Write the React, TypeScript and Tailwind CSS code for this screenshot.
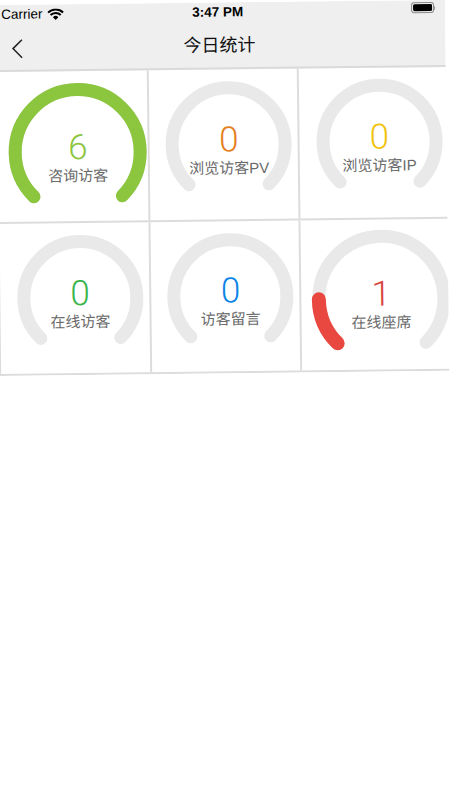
const sans = "font-['Liberation_Sans',sans-serif]";
const cjk = "font-['Liberation_Sans','Noto_Sans_CJK_SC',sans-serif]";

type Stat = {
  label: string;
  value: number;
  color: string;
  radius: number;
  offset: string;
  arc?: "full" | "low";
  arcColor?: string;
};

const ROW_ONE: Stat[] = [
  { label: "咨询访客", value: 6, color: "text-[#8cc63f]", radius: 69, offset: "mt-[12px] ml-[-1px]", arc: "full", arcColor: "#8cc63f" },
  { label: "浏览访客PV", value: 0, color: "text-[#e67e22]", radius: 63, offset: "mt-[0px]" },
  { label: "浏览访客IP", value: 0, color: "text-[#f1c40f]", radius: 63, offset: "mt-[-2px]" },
];

const ROW_TWO: Stat[] = [
  { label: "在线访客", value: 0, color: "text-[#39b54a]", radius: 63, offset: "mt-[0px]" },
  { label: "访客留言", value: 0, color: "text-[#0a84e8]", radius: 63, offset: "mt-[-1px]" },
  { label: "在线座席", value: 1, color: "text-[#d9443c]", radius: 69, offset: "mt-[8px]", arc: "low", arcColor: "#e8483f" },
];

function Gauge({ stat }: { stat: Stat }) {
  const size = stat.radius * 2;
  const mid = stat.radius - 6.5;
  const corner = mid * Math.SQRT1_2;
  const c = stat.radius;
  const left = `${c - corner} ${c + corner}`;
  const right = `${c + corner} ${c + corner}`;
  const full = `M${left} A${mid} ${mid} 0 1 1 ${right}`;

  return (
    <div className={`relative shrink-0 ${stat.offset}`} style={{ width: size, height: size }}>
      <svg width={size} height={size} fill="none" strokeLinecap="round" strokeWidth={13} className="overflow-visible">
        <path d={full} stroke="#e9e9e9" />
        {stat.arc === "full" && <path d={full} stroke={stat.arcColor} />}
        {stat.arc === "low" && (
          <path d={`M${left} A${mid} ${mid} 0 0 1 ${c - mid} ${c}`} stroke={stat.arcColor} strokeWidth={14} />
        )}
      </svg>
      <div className="absolute inset-0 flex flex-col items-center justify-center pt-[10px]">
        <span className={`h-[36px] font-['Roboto',sans-serif] text-[35px] font-[350] leading-[36px] ${stat.color}`}>
          {stat.value}
        </span>
        <span className={`h-[19px] whitespace-nowrap text-[15px] leading-[19px] text-[#6a6a6a] ${cjk}`}>
          {stat.label}
        </span>
      </div>
    </div>
  );
}

function StatRow({ stats, height }: { stats: Stat[]; height: string }) {
  return (
    <div className={`flex w-[452px] border-b-2 border-[#dcdcdc] ${height}`}>
      {stats.map((stat) => (
        <div
          key={stat.label}
          className="flex w-[150.5px] shrink-0 items-center justify-center border-l-2 border-[#dcdcdc] pl-[11px]"
        >
          <Gauge stat={stat} />
        </div>
      ))}
    </div>
  );
}

function WifiIcon() {
  return (
    <svg width="17" height="12" viewBox="0 0 17 12" fill="none" stroke="#000000" strokeWidth="2">
      <path d="M1 4.2a10.6 10.6 0 0 1 15 0" />
      <path d="M3.4 6.7a7.2 7.2 0 0 1 10.2 0" />
      <path d="M8.5 11.6 5.8 8.9a3.8 3.8 0 0 1 5.4 0Z" fill="#000000" stroke="none" />
    </svg>
  );
}

function BatteryIcon() {
  return (
    <div className="mt-[-5px] flex items-center">
      <div className="h-[11px] w-[23px] rounded-[3px] border border-[#8a8a8a] p-[1px]">
        <div className="h-full w-full rounded-[1.5px] bg-black" />
      </div>
      <div className="h-[4px] w-[1px] rounded-r-sm bg-[#9a9a9a]" />
    </div>
  );
}

export default function App() {
  return (
    <div className="h-[800px] w-[450px] overflow-hidden bg-white">
      <div className="ml-[-4.8px] mt-[5px] w-[450px] origin-top-left rotate-[-0.65deg] overflow-hidden bg-white">
        <header className="border-b-2 border-[#dadada] bg-[#efefef]">
          <div className={`flex h-[20px] items-center justify-between pl-[6px] pr-[10px] text-[13.5px] text-black ${sans}`}>
            <div className="flex items-center gap-[5px]">
              <span>Carrier</span>
              <WifiIcon />
            </div>
            <span className="mr-[40px] font-bold">3:47 PM</span>
            <BatteryIcon />
          </div>
          <div className="relative flex h-[45px] items-center justify-center pr-[2px] pt-[1px]">
            <button type="button" className="absolute left-[16px] top-[14px]">
              <svg width="12" height="20" viewBox="0 0 12 20" fill="none" stroke="#222222" strokeWidth="1.5" className="block">
                <path d="M10.5 1 1.5 9.8 10.5 19" />
              </svg>
            </button>
            <h1 className={`text-[18px] font-normal text-[#111111] ${cjk}`}>今日统计</h1>
          </div>
        </header>
        <StatRow stats={ROW_ONE} height="h-[152px]" />
        <StatRow stats={ROW_TWO} height="h-[152px]" />
      </div>
    </div>
  );
}
